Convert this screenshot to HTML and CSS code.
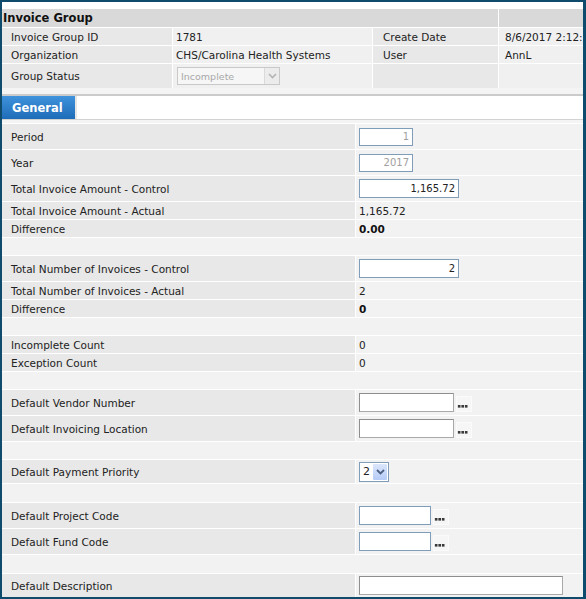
FILE: index.html
```html
<!DOCTYPE html>
<html>
<head>
  <meta charset="UTF-8">
  <title>Invoice Group</title>
  <link rel="stylesheet" href="styles.css">
</head>
<body>
  <div class="frame">

    <div class="info">
      <div class="info-title">Invoice Group</div>
      <div class="info-title-end"></div>

      <div class="lbl">Invoice Group ID</div>
      <div class="val">1781</div>
      <div class="lbl lbl-r">Create Date</div>
      <div class="val val-r">8/6/2017 2:12:</div>

      <div class="lbl">Organization</div>
      <div class="val">CHS/Carolina Health Systems</div>
      <div class="lbl lbl-r">User</div>
      <div class="val val-r">AnnL</div>

      <div class="lbl">Group Status</div>
      <div class="val">
        <div class="status-select">
          <span>Incomplete</span>
          <span class="status-arrow">
            <svg width="9" height="6" viewBox="0 0 9 6"><path d="M1 1 L4.5 4.5 L8 1" fill="none" stroke="#b4b4b4" stroke-width="1.6"/></svg>
          </span>
        </div>
      </div>
      <div class="lbl"></div>
      <div class="val"></div>
    </div>
    <div class="info-sep"></div>

    <div class="tabs">
      <div class="tab">General</div>
      <div class="tab-rest"></div>
    </div>

    <div class="form">
      <div class="form-top"></div>

      <div class="row tall">
        <div class="f-lbl">Period</div>
        <div class="f-val"><input class="txt w54 dim" type="text" value="1" disabled></div>
      </div>
      <div class="row tall">
        <div class="f-lbl">Year</div>
        <div class="f-val"><input class="txt w54 dim" type="text" value="2017" disabled></div>
      </div>
      <div class="row tall">
        <div class="f-lbl">Total Invoice Amount - Control</div>
        <div class="f-val"><input class="txt w100" type="text" value="1,165.72"></div>
      </div>
      <div class="row">
        <div class="f-lbl">Total Invoice Amount - Actual</div>
        <div class="f-val">1,165.72</div>
      </div>
      <div class="row">
        <div class="f-lbl">Difference</div>
        <div class="f-val"><b>0.00</b></div>
      </div>
      <div class="blank"></div>

      <div class="row tall">
        <div class="f-lbl">Total Number of Invoices - Control</div>
        <div class="f-val"><input class="txt w100" type="text" value="2"></div>
      </div>
      <div class="row">
        <div class="f-lbl">Total Number of Invoices - Actual</div>
        <div class="f-val">2</div>
      </div>
      <div class="row">
        <div class="f-lbl">Difference</div>
        <div class="f-val"><b>0</b></div>
      </div>
      <div class="blank"></div>

      <div class="row">
        <div class="f-lbl">Incomplete Count</div>
        <div class="f-val">0</div>
      </div>
      <div class="row">
        <div class="f-lbl">Exception Count</div>
        <div class="f-val">0</div>
      </div>
      <div class="blank"></div>

      <div class="row tall">
        <div class="f-lbl">Default Vendor Number</div>
        <div class="f-val">
          <input class="txt w95 gray" type="text">
          <span class="lookup"><svg width="16" height="16" viewBox="0 0 16 16"><rect x="1" y="8" width="3" height="3" fill="#3a3a3a"/><rect x="5" y="8" width="3" height="3" fill="#3a3a3a"/><rect x="9" y="8" width="3" height="3" fill="#3a3a3a"/></svg></span>
        </div>
      </div>
      <div class="row tall">
        <div class="f-lbl">Default Invoicing Location</div>
        <div class="f-val">
          <input class="txt w95 gray" type="text">
          <span class="lookup"><svg width="16" height="16" viewBox="0 0 16 16"><rect x="1" y="8" width="3" height="3" fill="#3a3a3a"/><rect x="5" y="8" width="3" height="3" fill="#3a3a3a"/><rect x="9" y="8" width="3" height="3" fill="#3a3a3a"/></svg></span>
        </div>
      </div>
      <div class="blank"></div>

      <div class="row mid">
        <div class="f-lbl">Default Payment Priority</div>
        <div class="f-val">
          <div class="prio">
            <span class="prio-num">2</span>
            <span class="prio-arrow">
              <svg width="9" height="6" viewBox="0 0 9 6"><path d="M1 1 L4.5 4.5 L8 1" fill="none" stroke="#4d6185" stroke-width="1.8"/></svg>
            </span>
          </div>
        </div>
      </div>
      <div class="blank b18"></div>

      <div class="row tall">
        <div class="f-lbl">Default Project Code</div>
        <div class="f-val">
          <input class="txt w72" type="text">
          <span class="lookup"><svg width="16" height="16" viewBox="0 0 16 16"><rect x="1" y="8" width="3" height="3" fill="#3a3a3a"/><rect x="5" y="8" width="3" height="3" fill="#3a3a3a"/><rect x="9" y="8" width="3" height="3" fill="#3a3a3a"/></svg></span>
        </div>
      </div>
      <div class="row tall">
        <div class="f-lbl">Default Fund Code</div>
        <div class="f-val">
          <input class="txt w72" type="text">
          <span class="lookup"><svg width="16" height="16" viewBox="0 0 16 16"><rect x="1" y="8" width="3" height="3" fill="#3a3a3a"/><rect x="5" y="8" width="3" height="3" fill="#3a3a3a"/><rect x="9" y="8" width="3" height="3" fill="#3a3a3a"/></svg></span>
        </div>
      </div>
      <div class="blank b18"></div>

      <div class="row mid">
        <div class="f-lbl">Default Description</div>
        <div class="f-val"><input class="txt w204 gray" type="text"></div>
      </div>
    </div>

  </div>
</body>
</html>
```

FILE: styles.css
```css
html, body {
  margin: 0;
  padding: 0;
}

body {
  font-family: "DejaVu Sans", Verdana, sans-serif;
  font-size: 10.5px;
  color: #222;
  background-color: #0f4b6c;
}

.frame {
  height: 599px;
  box-sizing: border-box;
  border-style: solid;
  border-color: #0f4b6c;
  border-width: 2px 3px 2px 2px;
  background-color: white;
  overflow: hidden;
}

/* top info block */
.info {
  display: grid;
  grid-template-columns: 170px 199px 125px 1fr;
  grid-template-rows: 18px 17px 17px 24px;
  gap: 1px;
  padding-top: 7px;
  background-color: white;
}

.info-title {
  grid-column: span 3;
  background-color: #d9d9d9;
  font-size: 11.5px;
  font-weight: bold;
  color: #111;
  padding-left: 1px;
  display: flex;
  align-items: center;
}

.info-title-end {
  background-color: #d9d9d9;
}

.lbl, .val {
  display: flex;
  align-items: center;
  white-space: nowrap;
  overflow: hidden;
}

.lbl {
  background-color: #e8e8e8;
  padding-left: 9px;
}

.lbl-r {
  padding-left: 10px;
}

.val {
  background-color: #f0f0f0;
  padding-left: 3px;
}

.val-r {
  padding-left: 6px;
}

.status-select {
  width: 103px;
  height: 18px;
  box-sizing: border-box;
  border: 1px solid #c9c9c9;
  background-color: #f6f6f6;
  margin-left: 1px;
  display: flex;
  align-items: center;
  justify-content: space-between;
  color: #a8a8a8;
  font-size: 9.5px;
  padding-left: 3px;
}

.status-arrow {
  width: 14px;
  height: 16px;
  background-color: #ececec;
  border-left: 1px solid #dadada;
  display: flex;
  align-items: center;
  justify-content: center;
}

.info-sep {
  height: 6px;
  background-color: #f4f4f4;
  border-bottom: 2px solid #cbcbcb;
}

/* tab strip */
.tabs {
  display: flex;
  height: 23px;
  border-bottom: 1px solid #d2d2d2;
}

.tab {
  width: 73px;
  background: linear-gradient(#3f92dc, #1e6cb8);
  color: white;
  font-size: 11.5px;
  font-weight: bold;
  padding-left: 10px;
  box-sizing: border-box;
  display: flex;
  align-items: center;
}

.tab-rest {
  flex: 1;
  border-left: 2px solid #e6e6e6;
  background-color: white;
}

/* form rows */
.form {
  background-color: white;
}

.form-top {
  height: 3px;
  background-color: #f4f4f4;
}

.row {
  display: grid;
  grid-template-columns: 353px 1fr;
  gap: 1px;
  height: 17px;
  margin-top: 1px;
}

.row.tall {
  height: 25px;
}

.row.mid {
  height: 23px;
}

.blank {
  height: 17px;
  margin-top: 1px;
  background-color: #f2f2f2;
}

.blank.b18 {
  height: 18px;
}

.f-lbl, .f-val {
  display: flex;
  align-items: center;
  white-space: nowrap;
}

.f-lbl {
  background-color: #e8e8e8;
  padding-left: 9px;
}

.f-val {
  background-color: #f2f2f2;
  padding-left: 3px;
}

.f-val b {
  font-weight: bold;
  color: #111;
}

.txt {
  height: 19px;
  box-sizing: border-box;
  border: 1px solid #7f9db9;
  background-color: white;
  font-family: "DejaVu Sans", Verdana, sans-serif;
  font-size: 10px;
  color: #222;
  text-align: right;
  padding: 0 3px;
  margin: 0;
}

.txt.dim {
  height: 18px;
  color: #a0a0a0;
}

.txt.gray {
  border: 1px solid #a9a9a9;
  border-top-color: #8e8e8e;
  border-left-color: #8e8e8e;
}

.w54 { width: 54px; }
.w72 { width: 72px; }
.w95 { width: 95px; }
.w100 { width: 100px; }
.w204 { width: 204px; }

.lookup {
  width: 16px;
  height: 16px;
  margin-left: 2px;
  margin-top: 3px;
  background-color: #f6f6f6;
  border: 1px solid #fbfbfb;
  box-sizing: border-box;
  display: flex;
}

.prio {
  width: 30px;
  height: 20px;
  box-sizing: border-box;
  border: 1px solid #7f9db9;
  background-color: white;
  display: flex;
  align-items: center;
  justify-content: space-between;
  padding: 1px;
}

.prio-num {
  padding-left: 2px;
  font-size: 11px;
}

.prio-arrow {
  width: 14px;
  height: 16px;
  background: linear-gradient(#dbe6fc, #b6cbf6);
  border-radius: 1px;
  display: flex;
  align-items: center;
  justify-content: center;
}
```
